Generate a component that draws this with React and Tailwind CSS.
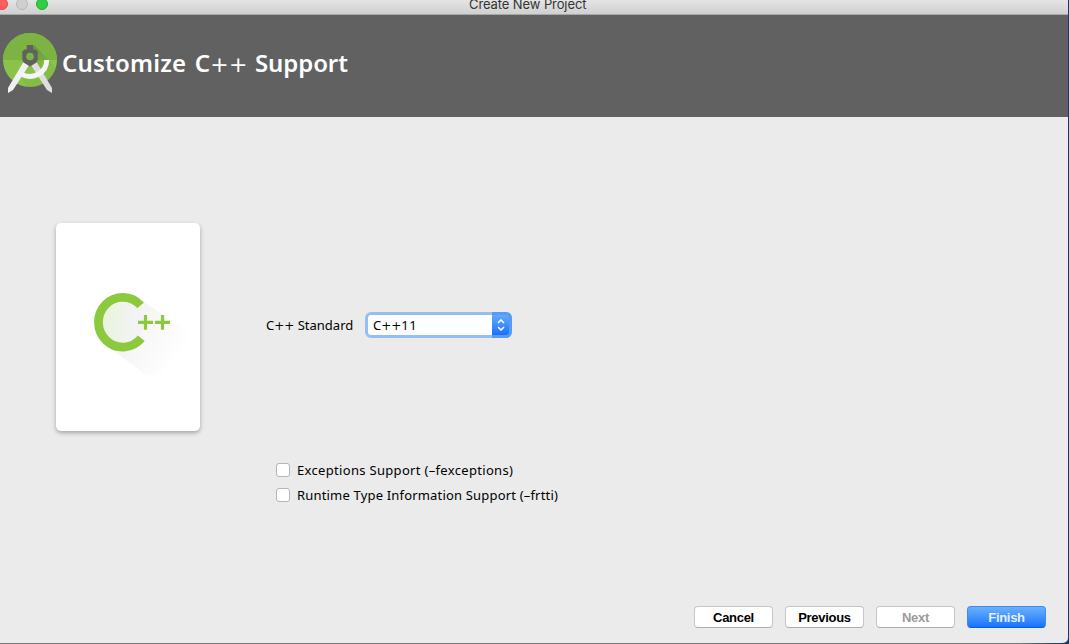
function StudioLogo() {
  return (
    <svg className="mt-4 h-16 w-[60px] shrink-0" viewBox="0 0 60 64" aria-hidden="true">
      <defs>
        <clipPath id="disc"><circle cx="30" cy="29" r="27" /></clipPath>
        <linearGradient id="shade" x1="0" y1="0" x2="1" y2="1">
          <stop offset="0" stopColor="#4f7f2b" stopOpacity="0.65" />
          <stop offset="0.600" stopColor="#5b9634" stopOpacity="0" />
        </linearGradient>
      </defs>
      <circle cx="30" cy="29" r="27" fill="#8bc34a" />
      <g clipPath="url(#disc)">
        <path d="M0 0H60V29H0Z" fill="#7cb342" />
        <path d="M34 14L60 40V60H50L29 33Z" fill="url(#shade)" />
        <path d="M48 29L60 41V64H30L22 46Q46 52 48 29Z" fill="#689f38" opacity="0.2" />
      </g>
      <path d="M24 30L8 57V62L13 59L30.500 32Z" fill="#f1f1f1" />
      <path d="M36 30L52 57V62L47 59L29.500 32Z" fill="#dedede" />
      <path d="M46.700 29A16.700 16.300 0 0 1 20.500 42.500" fill="none" stroke="#f5f5f5" strokeWidth="5" />
      <path d="M26.800 14H33.200V18.500H35.500L37.700 20.500V29L36.500 31.500L30 35.500L23.500 31.500L22.300 29V20.500L24.500 18.500H26.800Z" fill="#616161" />
      <circle cx="30" cy="25.500" r="3.800" fill="#7cb342" />
    </svg>
  );
}

function CppLogo() {
  return (
    <svg className="h-[208px] w-36" viewBox="0 0 144 208" aria-hidden="true">
      <defs>
        <linearGradient id="longShadow" gradientUnits="userSpaceOnUse" x1="45" y1="85" x2="125" y2="133">
          <stop offset="0" stopColor="#ececec" />
          <stop offset="0.600" stopColor="#f8f8f8" />
          <stop offset="1" stopColor="#fff" />
        </linearGradient>
        <linearGradient id="inner">
          <stop offset="0" stopColor="#e8f5dc" />
          <stop offset="0.700" stopColor="#f3f3f3" />
        </linearGradient>
      </defs>
      <path d="M88 79L130 108Q136 115 128 122L112 143Q100 154 90 152L55 126Z" fill="url(#longShadow)" />
      <path d="M82 85A21 21 0 1 0 82 115L90 100Z" fill="url(#inner)" />
      <path d="M84.700 82.400A24.300 24.900 0 1 0 85.300 115.300" fill="none" stroke="#8dc93f" strokeWidth="8.800" />
      <path d="M82 99.300H97M89.500 92V106.700M99 99.300H114M106.500 92V106.700" stroke="#8dc93f" strokeWidth="3.200" />
    </svg>
  );
}

function CheckRow({ label, spacing }) {
  return (
    <label className="flex h-[25px] items-center gap-[7px]">
      <input type="checkbox" className="h-3.5 w-3.5 appearance-none rounded-[3px] border border-[#b5b5b5] bg-white" />
      <span className={`pt-0.5 whitespace-nowrap ${spacing}`}>{label}</span>
    </label>
  );
}

function Cpp({ plusClass }) {
  return <>C<span className={`font-['DejaVu_Sans',sans-serif] leading-none font-normal ${plusClass}`}>++</span></>;
}

const plain = "border-[#c6c6c6] border-b-[#adadad] bg-white";

function DialogButton({ children, className }) {
  return (
    <button className={`flex h-[22px] w-[79px] items-center justify-center rounded-[4px] border pt-px font-['Liberation_Sans',sans-serif] text-[13px] font-bold tracking-[-0.300px] ${className}`}>
      {children}
    </button>
  );
}

export default function App() {
  return (
    <div className="h-[644px] w-[1069px] overflow-hidden bg-[linear-gradient(90deg,#777_0_1020px,#22365e_1060px)] font-['Noto_Sans',sans-serif] text-[13px] text-black">
      <div className="flex h-[643px] w-[1068px] flex-col overflow-hidden rounded-br-[5px] bg-[#ebebeb]">
        <div className="flex h-[15px] shrink-0 overflow-hidden border-b border-[#a5aaa8] bg-linear-to-b from-[#e4e4e4] to-[#d0d0d0]">
          <div className="-mt-0.5 -ml-1 flex w-[52px] gap-2">
            <i className="h-3 w-3 rounded-full border border-[#e2494a] bg-[#ff5f5c]" />
            <i className="h-3 w-3 rounded-full border border-[#b7b7b7] bg-[#cfcfcf]" />
            <i className="h-3 w-3 rounded-full border border-[#20ad32] bg-[#30cf43]" />
          </div>
          <div className="ml-[421px] whitespace-nowrap font-['Inter',sans-serif] text-[13px] leading-[9px] tracking-[-0.100px] text-[#333]">Create New Project</div>
        </div>
        <header className="flex h-[102px] shrink-0 items-start bg-[#616161] text-white">
          <StudioLogo />
          <h1 className="mt-[31px] ml-0.5 whitespace-nowrap text-[24px] leading-[34px] font-semibold tracking-[0.200px]">
            Customize <span className="ml-0.5"><Cpp plusClass="text-[22px]" /></span> <span className="ml-px tracking-[-0.100px]">Support</span>
          </h1>
        </header>
        <main className="flex grow pl-14">
          <div className="mt-[106px] h-[208px] w-36 shrink-0 overflow-hidden rounded-[5px] bg-white shadow-[0_2px_4px_rgba(0,0,0,0.3)]">
            <CppLogo />
          </div>
          <div className="ml-[66px] flex flex-col pt-[195px]">
            <div className="flex h-[26px] items-center">
              <span className="w-[99px] pt-0.5 whitespace-nowrap"><Cpp plusClass="text-[12px]" /> Standard</span>
              <div className="flex h-[26px] w-[147px] rounded-[6px] bg-[#94bff4] p-[3px]">
                <div className="flex grow items-center rounded-l-[3px] bg-white pt-0.5 pl-[5px]"><Cpp plusClass="text-[12px]" /><span className="tracking-[0.500px]">11</span></div>
                <div className="-my-[3px] -mr-[3px] flex w-[20px] items-center rounded-r-[6px] bg-[#569bf7] py-[3px] pr-[3px]">
                  <div className="flex h-5 w-[17px] items-center justify-center rounded-r-[3px] bg-linear-to-b from-[#63a9fb] to-[#1470fb]">
                    <svg className="h-3 w-2" viewBox="0 0 8 12" fill="none" stroke="white" strokeWidth="1.500"><path d="M1 4L4 1L7 4M1 8L4 11L7 8" /></svg>
                  </div>
                </div>
              </div>
            </div>
            <div className="mt-[119px] ml-2.5">
              <CheckRow label="Exceptions Support (–fexceptions)" spacing="tracking-[0.320px]" />
              <CheckRow label="Runtime Type Information Support (–frtti)" spacing="tracking-[0.180px]" />
            </div>
          </div>
        </main>
        <footer className="mr-[22px] mb-[15px] flex shrink-0 justify-end gap-3">
          <DialogButton className={plain}>Cancel</DialogButton>
          <DialogButton className={plain}>Previous</DialogButton>
          <DialogButton className={`${plain} text-[#9b9b9b]`}>Next</DialogButton>
          <DialogButton className="border-[#3d8cf5] border-b-[#0b5be5] bg-linear-to-b from-[#6ab0fb] to-[#1673fd] text-[#e4efff]">Finish</DialogButton>
        </footer>
      </div>
    </div>
  );
}
